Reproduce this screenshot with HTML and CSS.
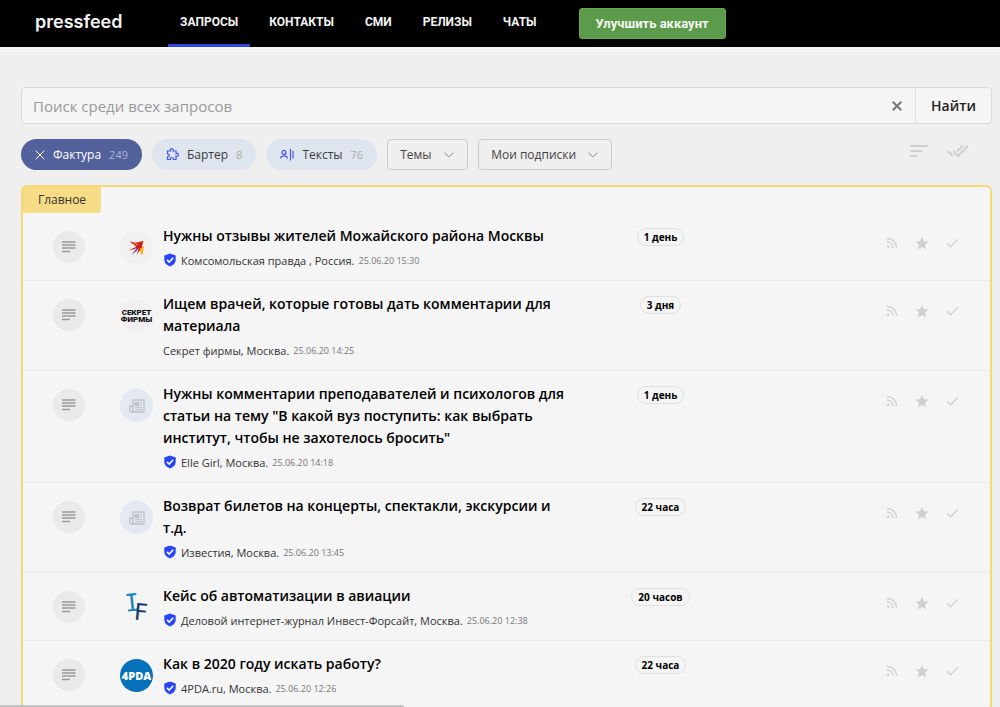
FILE: index.html
```
<!DOCTYPE html>
<html lang="ru">
<head>
<meta charset="utf-8">
<title>pressfeed</title>
<link rel="stylesheet" href="styles.css">
</head>
<body>
<svg class="defs" aria-hidden="true">
  <symbol id="lines" viewBox="0 0 14 12"><path d="M0 1h13.500M0 4h13.500M0 7h13.500M0 10.500h8" stroke="currentColor" stroke-width="1.400" fill="none"/></symbol>
  <symbol id="shield" viewBox="0 0 12 14"><path d="M6 .5 11.700 2.500V7c0 3-2.400 5.200-5.700 6.500C2.700 12.200.3 10 .3 7V2.500z" fill="#2a45f5"/><path d="m3 6.900 2.200 2.200 4-4.300" fill="none" stroke="#fff" stroke-width="1.500"/></symbol>
  <symbol id="rss" viewBox="0 0 12 12"><g fill="none" stroke="currentColor" stroke-width="1.300"><path d="M1 1.500c5.500 0 9.500 4 9.500 9.500M1 5c3.500 0 6 2.500 6 6"/></g><circle cx="2.200" cy="9.800" r="1.300" fill="currentColor"/></symbol>
  <symbol id="star" viewBox="0 0 14 14"><path d="m7 .7 1.800 4.500 4.900.4-3.700 3.200 1.100 4.700L7 11l-4.100 2.500L4 8.800.3 5.600l4.900-.4z" fill="currentColor"/></symbol>
  <symbol id="check" viewBox="0 0 13 12"><path d="m1 6.200 3.500 3.500 7.500-7.500" fill="none" stroke="currentColor" stroke-width="1.400"/></symbol>
  <symbol id="paper" viewBox="0 0 16 14"><g fill="none" stroke="currentColor" stroke-width="1.300"><path d="M4 1h11v12H2.500C1.300 13 1 12.200 1 11.500V7h3"/><path d="M4 1v10.500c0 1-.5 1.500-1.500 1.500"/></g><path d="M6 3.500h3.500v3H6zM10.500 4h2.500M10.500 6h2.500M6 8.300h7M6 10.500h7" fill="currentColor" stroke="currentColor" stroke-width="1"/></symbol>
  <symbol id="chevron" viewBox="0 0 10 6"><path d="m.7.7 4.300 4.200L9.300.7" fill="none" stroke="currentColor"/></symbol>
  <symbol id="cross" viewBox="0 0 10 10"><path d="m.7.7 8.600 8.600M9.300.7.7 9.300" fill="none" stroke="currentColor" stroke-width="var(--w,1)"/></symbol>
</svg>

<header class="topbar">
  <a class="brand" href="#">pressfeed</a>
  <nav class="nav">
    <a class="nav-link active" href="#">ЗАПРОСЫ</a>
    <a class="nav-link" href="#">КОНТАКТЫ</a>
    <a class="nav-link" href="#">СМИ</a>
    <a class="nav-link" href="#">РЕЛИЗЫ</a>
    <a class="nav-link" href="#">ЧАТЫ</a>
  </nav>
  <button class="upgrade" type="button">Улучшить аккаунт</button>
</header>

<main class="content">
  <form class="search">
    <input class="search-input" type="text" placeholder="Поиск среди всех запросов" aria-label="Поиск">
    <button class="search-clear" type="button" aria-label="Очистить"><svg width="10" height="10"><use href="#cross"/></svg></button>
    <button class="search-submit" type="button">Найти</button>
  </form>

  <div class="filters">
    <button class="chip chip-on" type="button"><svg width="10" height="10"><use href="#cross"/></svg><span>Фактура</span><span class="count">249</span></button>
    <button class="chip" type="button">
      <svg width="13" height="13" viewBox="0 0 13 13"><path d="M1.500 3h3c-.6-1.800.3-2.300 1.200-2.300S7.500 1.300 7 3h3v2.500c1.700-.5 2.400.3 2.400 1.300S11.700 8.600 10 8v3.500H7.300c.2-1.600-.6-2-1.500-2s-1.600.5-1.400 2H1.500V8.700c1.500.2 1.900-.6 1.900-1.400s-.5-1.500-1.900-1.300z" fill="none" stroke="currentColor" stroke-width="1.200"/></svg>
      <span>Бартер</span><span class="count">8</span></button>
    <button class="chip" type="button">
      <svg width="14" height="12" viewBox="0 0 14 12"><g fill="none" stroke="currentColor" stroke-width="1.200"><circle cx="4" cy="3.400" r="2"/><path d="M.7 9.500C.7 7.500 2 6.800 4 6.800s3.300.7 3.300 2.700M10.500 0v11.500M13 2v7.500"/></g></svg>
      <span>Тексты</span><span class="count">76</span></button>
    <div class="picker"><select aria-label="Темы"><option>Темы</option></select><svg width="10" height="6"><use href="#chevron"/></svg></div>
    <div class="picker picker-wide"><select aria-label="Мои подписки"><option>Мои подписки</option></select><svg width="10" height="6"><use href="#chevron"/></svg></div>
    <div class="tools">
      <button class="tool" type="button" aria-label="Сортировка"><svg width="18" height="14" viewBox="0 0 18 14"><path d="M1 2h16M1 7h10.500M1 12h5" stroke="currentColor" stroke-width="2" stroke-linecap="round"/></svg></button>
      <button class="tool" type="button" aria-label="Прочитать все"><svg width="22" height="14" viewBox="0 0 22 14"><path d="m.8 6.800 5 5.200M6.300 7l4.700 5L21 1.500M10 7.500l5.800-6" fill="none" stroke="currentColor" stroke-width="2"/></svg></button>
    </div>
  </div>

  <section class="board">
    <h2 class="board-tab">Главное</h2>

    <article class="row">
      <span class="kind"><svg width="14" height="12"><use href="#lines"/></svg></span>
      <span class="logo"><svg width="18" height="18" viewBox="0 0 18 18"><path d="m9 7 7 .5-1.500 9-3.500-5z" fill="#f5b120"/><path d="m1.500 2.500 6 1.200L15.500 2 13.500 9l-3 .5L9 11 7.500 7z" fill="#c8201b"/><path d="m3 3 5 1.500 3 .5-2 2z" fill="#ea6a1c"/><path d="m9 7.500-8.500 4L7 10z" fill="#c3181d"/><path d="M9.500 8 3.500 16 9 11.500z" fill="#6a3fa0"/><path d="m11 8.500-2.500 7.500 4-6z" fill="#c3181d"/></svg></span>
      <div class="body"><h3 class="title"><a href="#">Нужны отзывы жителей Можайского района Москвы</a></h3>
        <p class="meta"><svg class="verified" width="12" height="14"><use href="#shield"/></svg>Комсомольская правда , Россия. <time>25.06.20 15:30</time></p></div>
      <span class="due">1 день</span>
      <div class="actions"><button type="button" aria-label="Подписаться"><svg width="12" height="12"><use href="#rss"/></svg></button><button type="button" aria-label="В избранное"><svg width="14" height="14"><use href="#star"/></svg></button><button type="button" aria-label="Прочитано"><svg width="13" height="12"><use href="#check"/></svg></button></div>
    </article>

    <article class="row">
      <span class="kind"><svg width="14" height="12"><use href="#lines"/></svg></span>
      <span class="logo"><span class="secret">СЕКРЕТ<br>ФИРМЫ</span></span>
      <div class="body"><h3 class="title"><a href="#">Ищем врачей, которые готовы дать комментарии для материала</a></h3>
        <p class="meta">Секрет фирмы, Москва. <time>25.06.20 14:25</time></p></div>
      <span class="due">3 дня</span>
      <div class="actions"><button type="button" aria-label="Подписаться"><svg width="12" height="12"><use href="#rss"/></svg></button><button type="button" aria-label="В избранное"><svg width="14" height="14"><use href="#star"/></svg></button><button type="button" aria-label="Прочитано"><svg width="13" height="12"><use href="#check"/></svg></button></div>
    </article>

    <article class="row">
      <span class="kind"><svg width="14" height="12"><use href="#lines"/></svg></span>
      <span class="logo logo-empty"><svg width="16" height="14"><use href="#paper"/></svg></span>
      <div class="body"><h3 class="title"><a href="#">Нужны комментарии преподавателей и психологов для статьи на тему "В какой вуз поступить: как выбрать институт, чтобы не захотелось бросить"</a></h3>
        <p class="meta"><svg class="verified" width="12" height="14"><use href="#shield"/></svg>Elle Girl, Москва. <time>25.06.20 14:18</time></p></div>
      <span class="due">1 день</span>
      <div class="actions"><button type="button" aria-label="Подписаться"><svg width="12" height="12"><use href="#rss"/></svg></button><button type="button" aria-label="В избранное"><svg width="14" height="14"><use href="#star"/></svg></button><button type="button" aria-label="Прочитано"><svg width="13" height="12"><use href="#check"/></svg></button></div>
    </article>

    <article class="row">
      <span class="kind"><svg width="14" height="12"><use href="#lines"/></svg></span>
      <span class="logo logo-empty"><svg width="16" height="14"><use href="#paper"/></svg></span>
      <div class="body"><h3 class="title"><a href="#">Возврат билетов на концерты, спектакли, экскурсии и т.д.</a></h3>
        <p class="meta"><svg class="verified" width="12" height="14"><use href="#shield"/></svg>Известия, Москва. <time>25.06.20 13:45</time></p></div>
      <span class="due">22 часа</span>
      <div class="actions"><button type="button" aria-label="Подписаться"><svg width="12" height="12"><use href="#rss"/></svg></button><button type="button" aria-label="В избранное"><svg width="14" height="14"><use href="#star"/></svg></button><button type="button" aria-label="Прочитано"><svg width="13" height="12"><use href="#check"/></svg></button></div>
    </article>

    <article class="row">
      <span class="kind"><svg width="14" height="12"><use href="#lines"/></svg></span>
      <span class="logo logo-plain"><svg class="forsight" width="33" height="33" viewBox="0 0 33 33"><text x="5" y="20" font-size="24" fill="#1a84b8" transform="rotate(-6 12 12)">I</text><text x="14" y="29" font-size="23" fill="#16356c" transform="rotate(5 20 20)">F</text></svg></span>
      <div class="body"><h3 class="title"><a href="#">Кейс об автоматизации в авиации</a></h3>
        <p class="meta"><svg class="verified" width="12" height="14"><use href="#shield"/></svg>Деловой интернет-журнал Инвест-Форсайт, Москва. <time>25.06.20 12:38</time></p></div>
      <span class="due">20 часов</span>
      <div class="actions"><button type="button" aria-label="Подписаться"><svg width="12" height="12"><use href="#rss"/></svg></button><button type="button" aria-label="В избранное"><svg width="14" height="14"><use href="#star"/></svg></button><button type="button" aria-label="Прочитано"><svg width="13" height="12"><use href="#check"/></svg></button></div>
    </article>

    <article class="row">
      <span class="kind"><svg width="14" height="12"><use href="#lines"/></svg></span>
      <span class="logo logo-pda">4PDA</span>
      <div class="body"><h3 class="title"><a href="#">Как в 2020 году искать работу?</a></h3>
        <p class="meta"><svg class="verified" width="12" height="14"><use href="#shield"/></svg>4PDA.ru, Москва. <time>25.06.20 12:26</time></p></div>
      <span class="due">22 часа</span>
      <div class="actions"><button type="button" aria-label="Подписаться"><svg width="12" height="12"><use href="#rss"/></svg></button><button type="button" aria-label="В избранное"><svg width="14" height="14"><use href="#star"/></svg></button><button type="button" aria-label="Прочитано"><svg width="13" height="12"><use href="#check"/></svg></button></div>
    </article>
  </section>
</main>
<div class="statusline"></div>
</body>
</html>
```
FILE: styles.css
```
* { box-sizing: border-box; }
body { margin: 0; height: 100vh; overflow: hidden; background: #efefef; color: #333; font-family: "Open Sans", "Noto Sans", sans-serif; font-size: 12px; }
button, select, input { font: inherit; color: inherit; margin: 0; padding: 0; border: 0; background: none; }
a { color: inherit; text-decoration: none; }
h2, h3, p { margin: 0; }
svg { display: block; flex: none; }
.defs { position: absolute; width: 0; height: 0; }

.topbar { display: flex; align-items: center; height: 47px; padding-left: 35px; background: #000; color: #f4f4f4; font-family: Roboto, sans-serif; }
.brand { width: 133px; padding-bottom: 4px; font-family: Inter, sans-serif; font-size: 18px; font-weight: 600; }
.nav { display: flex; align-self: stretch; gap: 7px; }
.nav-link { padding: 0 12px; line-height: 45px; font-size: 12px; font-weight: 700; }
.nav-link.active { border-bottom: 3px solid #3347e0; }
.upgrade { height: 31px; margin-left: 30px; padding: 0 16px; border-radius: 3px; background: #5c9b49; border: 1px solid #67a954; font-family: Roboto, sans-serif; font-size: 13px; font-weight: 700; }

.content { padding: 35px 8px 0 21px; border-top: 5px solid #f6f5f6; }
.search { display: flex; height: 37px; border: 1px solid #dadada; border-radius: 4px; background: #f5f5f5; }
.search-input { flex: 1; min-width: 0; padding-left: 11px; font-size: 15px; outline: 0; }
.search-input::placeholder { color: #999; opacity: 1; }
.search-clear { display: grid; place-items: center; width: 36px; color: #777; --w: 2; }
.search-submit { width: 76px; border-left: 1px solid #dfdfdf; color: #222; font-size: 14px; font-weight: 600; }

.filters { display: flex; align-items: center; gap: 10px; margin-top: 15px; }
.chip { display: flex; align-items: center; gap: 8px; height: 31px; padding: 0 14px; border-radius: 16px; background: #dee5ee; color: #4a57e8; font-weight: 500; }
.chip span { color: #3c3c3c; }
.chip .count { color: #a9adb2; font-size: 11px; }
.chip-on { background: #52619b; color: #fff; }
.chip-on span { color: #fff; }
.chip-on .count { color: #a9b3dc; }
.picker { display: grid; grid-template-columns: minmax(0, 1fr) 24px; align-items: center; width: 81px; height: 31px; color: #888; }
.picker-wide { width: 134px; }
.picker select { grid-area: 1 / 1 / 2 / 3; height: 31px; padding: 0 12px; border: 1px solid #cbcbcb; border-radius: 4px; appearance: none; color: #444; }
.picker svg { grid-area: 1 / 2; pointer-events: none; }
.tools { display: flex; gap: 19px; margin: 0 23px 8px auto; color: #cfcfcf; }

.board { margin-top: 15px; border: 2px solid #f6d875; border-radius: 6px; background: #f5f5f5; }
.board-tab { width: 78px; height: 26px; border-radius: 0 0 3px 0; background: #f5dc85; color: #333; text-align: center; font-size: 12px; line-height: 26px; font-weight: 500; }
.row { display: grid; grid-template-columns: 67px 43px minmax(0, 41fr) 18fr 21fr; align-items: start; padding: 12px 31px 8px 30px; border-bottom: 1px solid #eaeaea; }
.kind, .logo { display: grid; place-items: center; width: 32px; height: 32px; margin-top: 6px; border-radius: 50%; background: #eaeaea; color: #999; }
.logo { width: 33px; height: 33px; background: #f0f0f0; }
.logo-empty { background: #e4e8f0; color: #b9bfc9; }
.logo-plain { background: none; }
.logo-pda { background: #0671b9; color: #fff; font-size: 11px; font-weight: 800; }
.secret { color: #111; font-family: Roboto, sans-serif; font-size: 8px; line-height: 7px; font-weight: 900; text-align: center; }
.forsight { overflow: visible; font-family: "DejaVu Sans Mono", monospace; }
.title { color: #000; font-size: 14px; line-height: 22px; font-weight: 600; }
.meta { display: flex; align-items: center; gap: 4px; height: 24px; margin-top: 1px; color: #333; font-size: 11px; font-weight: 500; }
.verified { margin: 0 1px; }
.meta time { color: #777; font-size: 9px; font-weight: 500; }
.due { justify-self: center; height: 18px; margin-top: 3px; padding: 0 6px; border: 1px solid #e0e0e0; border-radius: 9px; color: #000; font-size: 10px; line-height: 17px; font-weight: 700; }
.actions { display: flex; align-items: center; justify-self: end; gap: 17px; margin-top: 11px; color: #cfcfcf; }
.statusline { position: fixed; left: 0; bottom: 0; width: 404px; height: 2px; background: #c4c4c4; border-radius: 0 2px 0 0; }
```
